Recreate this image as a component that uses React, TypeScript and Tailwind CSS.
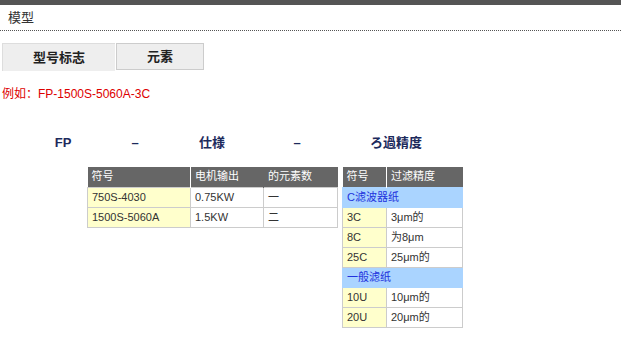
import React from 'react';

const font = { fontFamily: '"Liberation Sans", Arial, "Noto Sans CJK SC", sans-serif' };

const specRows = [
  { code: '750S-4030', power: '0.75KW', count: '一' },
  { code: '1500S-5060A', power: '1.5KW', count: '二' },
];

const filterGroups = [
  {
    name: 'C滤波器纸',
    rows: [
      { code: '3C', grade: '3μm的' },
      { code: '8C', grade: '为8μm' },
      { code: '25C', grade: '25μm的' },
    ],
  },
  {
    name: '一般滤纸',
    rows: [
      { code: '10U', grade: '10μm的' },
      { code: '20U', grade: '20μm的' },
    ],
  },
];

const heads = [
  { label: 'FP', w: 'w-[66px]' },
  { label: '–', w: 'w-[78px]' },
  { label: '仕様', w: 'w-[76px]' },
  { label: '–', w: 'w-[94px]' },
  { label: 'ろ過精度', w: 'w-[104px]' },
];

export default function App() {
  return (
    <div className="w-[623px] h-[343px] bg-white text-[#333] overflow-hidden" style={font}>
      <div className="w-[621px] h-[5px] bg-[#555]" />
      <div className="w-[621px] h-[26px] border-b border-dotted border-[#555] pl-[8px] pt-[6px] text-[13px] leading-[14px]">
        模型
      </div>

      {/* tabs */}
      <div className="flex pl-[2px] mt-[12px] gap-[1px]">
        <div className="w-[113px] h-[28px] bg-[#eee] border-l border-t border-[#ddd] flex items-center justify-center text-[13px] font-bold text-[#222]">
          型号标志
        </div>
        <div className="w-[88px] h-[27px] bg-[#eee] border border-[#ccc] flex items-center justify-center text-[13px] font-bold text-[#222]">
          元素
        </div>
      </div>

      <div className="pl-[2px] mt-[16px] text-[12px] leading-[14px] text-[#d00]">例如：FP-1500S-5060A-3C</div>

      {/* model code parts */}
      <div className="flex pl-[30px] mt-[34px] text-[13px] font-bold text-[#1c2a5c] leading-[16px]">
        {heads.map((h, i) => (
          <div key={i} className={`${h.w} text-center`}>{h.label}</div>
        ))}
      </div>

      <div className="flex items-start mt-[16px] text-[11px] leading-[19px] text-[#333]">
        <table className="ml-[87px] border-collapse">
          <thead>
            <tr className="bg-[#666] text-white h-[20px]">
              <th className="w-[103px] font-normal text-left pl-[4px] border-r border-white">符号</th>
              <th className="w-[73px] font-normal text-left pl-[4px] border-r border-[#666]">电机输出</th>
              <th className="w-[74px] font-normal text-left pl-[4px]">的元素数</th>
            </tr>
          </thead>
          <tbody>
            {specRows.map((r) => (
              <tr key={r.code} className="h-[20px]">
                <td className="bg-[#ffffcc] pl-[4px] border border-[#ccc]">{r.code}</td>
                <td className="pl-[4px] border border-[#ccc]">{r.power}</td>
                <td className="pl-[4px] border border-[#ccc]">{r.count}</td>
              </tr>
            ))}
          </tbody>
        </table>

        <table className="ml-[4px] border-collapse">
          <thead>
            <tr className="bg-[#666] text-white h-[20px]">
              <th className="w-[44px] font-normal text-left pl-[4px] border-r border-white">符号</th>
              <th className="w-[76px] font-normal text-left pl-[4px]">过滤精度</th>
            </tr>
          </thead>
          <tbody>
            {filterGroups.map((g) => (
              <React.Fragment key={g.name}>
                <tr className="h-[20px]">
                  <td colSpan={2} className="bg-[#aad4ff] text-[#2233dd] pl-[4px] border border-[#aad4ff]">
                    {g.name}
                  </td>
                </tr>
                {g.rows.map((r) => (
                  <tr key={r.code} className="h-[20px]">
                    <td className="bg-[#ffffcc] pl-[4px] border border-[#ccc]">{r.code}</td>
                    <td className="pl-[4px] border border-[#ccc]">{r.grade}</td>
                  </tr>
                ))}
              </React.Fragment>
            ))}
          </tbody>
        </table>
      </div>
    </div>
  );
}
